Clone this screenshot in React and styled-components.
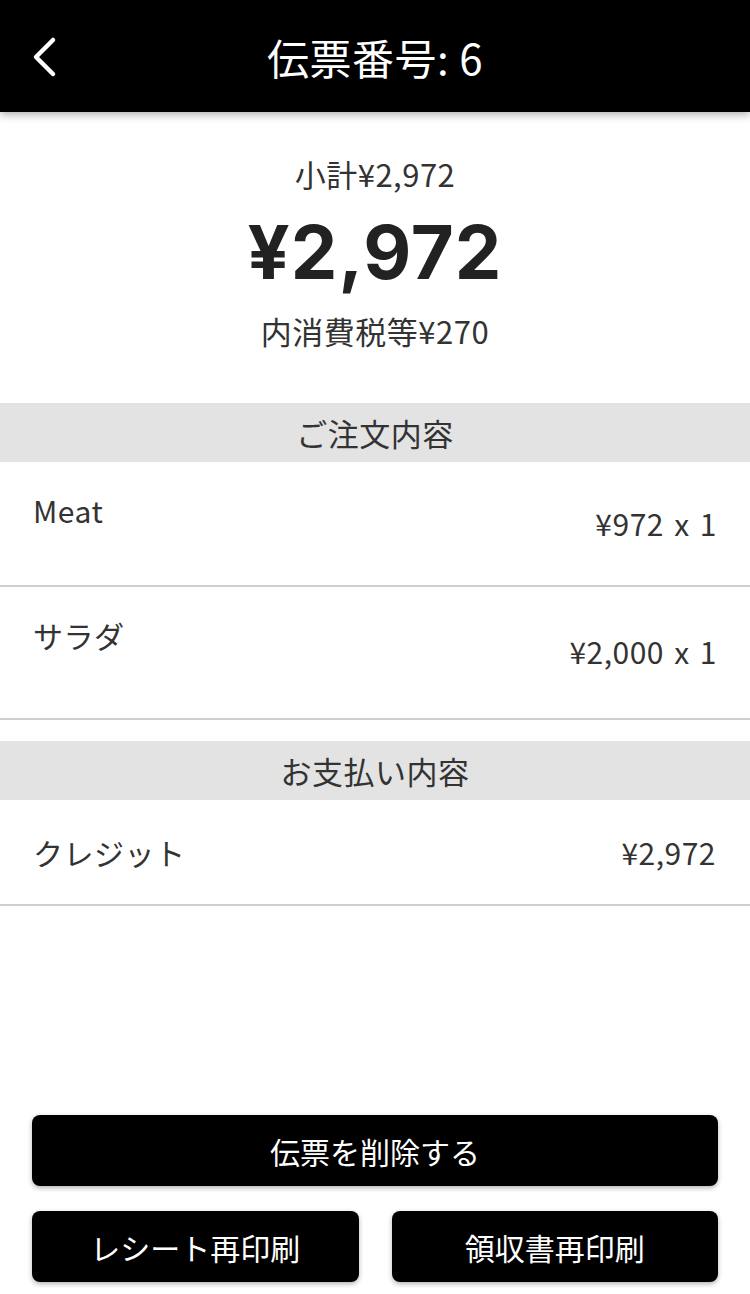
import React from 'react';
import styled, { createGlobalStyle } from 'styled-components';

const GlobalStyle = createGlobalStyle`
  html, body {
    margin: 0;
    padding: 0;
    background: #fff;
  }
  body {
    font-family: "Noto Sans CJK JP", "Noto Sans", sans-serif;
    color: #333;
  }
`;

const Page = styled.div`
  display: flex;
  flex-direction: column;
  width: 750px;
  height: 1294px;
  overflow: hidden;
`;

const Header = styled.header`
  position: relative;
  display: flex;
  align-items: center;
  justify-content: center;
  height: 112px;
  background: #000;
  box-shadow: 0 3px 8px rgba(0, 0, 0, 0.3);
  z-index: 1;
`;

const BackButton = styled.button`
  position: absolute;
  left: 26px;
  top: 34px;
  width: 40px;
  height: 46px;
  padding: 0;
  border: 0;
  background: none;
  cursor: pointer;
`;

const HeaderTitle = styled.h1`
  margin: 0;
  font-size: 42px;
  font-weight: 400;
  color: #fff;
  letter-spacing: 0.5px;
`;

const Summary = styled.section`
  display: flex;
  flex-direction: column;
  align-items: center;
  padding-top: 42px;
  height: 291px;
  box-sizing: border-box;
`;

const SubText = styled.div`
  font-size: 31px;
  line-height: 40px;
  letter-spacing: 0.5px;
  color: #333;
  margin-top: ${({ $top }) => $top || 0}px;
`;

const Total = styled.div`
  font-family: Inter, "Noto Sans CJK JP", sans-serif;
  font-size: 74px;
  font-weight: 700;
  line-height: 96px;
  margin-top: 10px;
  color: #222;
  letter-spacing: 1px;
`;

const SectionHead = styled.div`
  height: 59px;
  display: flex;
  align-items: center;
  justify-content: center;
  background: #e3e3e3;
  font-size: 31px;
  letter-spacing: 0.5px;
  color: #333;
  margin-top: ${({ $top }) => $top || 0}px;
`;

const ItemRow = styled.div`
  display: flex;
  justify-content: space-between;
  align-items: flex-start;
  height: ${({ $h }) => $h}px;
  padding: 28px 33px 0 33px;
  box-sizing: border-box;
  border-bottom: 2px solid #cfcfcf;
  font-size: 30px;
  line-height: 40px;
`;

const ItemName = styled.span`
  color: #333;
  letter-spacing: 0.5px;
`;

const ItemPrice = styled.span`
  color: #333;
  letter-spacing: 0.5px;
  word-spacing: 3px;
  margin-top: ${({ $offset }) => $offset}px;
`;

const PayRow = styled.div`
  display: flex;
  justify-content: space-between;
  align-items: center;
  height: 106px;
  padding: 0 34px 0 33px;
  box-sizing: border-box;
  border-bottom: 2px solid #cfcfcf;
  font-size: 30px;
`;

const Actions = styled.div`
  margin-top: auto;
  display: grid;
  grid-template-columns: 1fr 1fr;
  gap: 25px 33px;
  padding: 0 32px 12px;
`;

const ActionButton = styled.button`
  grid-column: ${({ $wide }) => ($wide ? '1 / -1' : 'auto')};
  height: 71px;
  border: 0;
  border-radius: 8px;
  background: #000;
  color: #fff;
  font-family: "Noto Sans CJK JP", sans-serif;
  font-size: 30px;
  box-shadow: 0 2px 5px rgba(0, 0, 0, 0.3);
  cursor: pointer;
`;

const items = [
  { name: 'Meat', price: '¥972 x 1', h: 125, offset: 13 },
  { name: 'サラダ', price: '¥2,000 x 1', h: 133, offset: 16 },
];

const App = () => (
  <Page>
    <GlobalStyle />
    <Header>
      <BackButton aria-label="戻る">
        <svg width="40" height="46" viewBox="0 0 40 46">
          <polyline
            points="27,6 10,23 27,40"
            fill="none"
            stroke="#fff"
            strokeWidth="4.5"
            strokeLinecap="round"
            strokeLinejoin="round"
          />
        </svg>
      </BackButton>
      <HeaderTitle>伝票番号: 6</HeaderTitle>
    </Header>

    <Summary>
      <SubText>小計¥2,972</SubText>
      <Total>¥2,972</Total>
      <SubText $top={11}>内消費税等¥270</SubText>
    </Summary>

    <SectionHead>ご注文内容</SectionHead>
    {items.map((item) => (
      <ItemRow key={item.name} $h={item.h}>
        <ItemName>{item.name}</ItemName>
        <ItemPrice $offset={item.offset}>{item.price}</ItemPrice>
      </ItemRow>
    ))}

    <SectionHead $top={21}>お支払い内容</SectionHead>
    <PayRow>
      <ItemName>クレジット</ItemName>
      <ItemPrice $offset={0}>¥2,972</ItemPrice>
    </PayRow>

    <Actions>
      <ActionButton $wide>伝票を削除する</ActionButton>
      <ActionButton>レシート再印刷</ActionButton>
      <ActionButton>領収書再印刷</ActionButton>
    </Actions>
  </Page>
);

export default App;
